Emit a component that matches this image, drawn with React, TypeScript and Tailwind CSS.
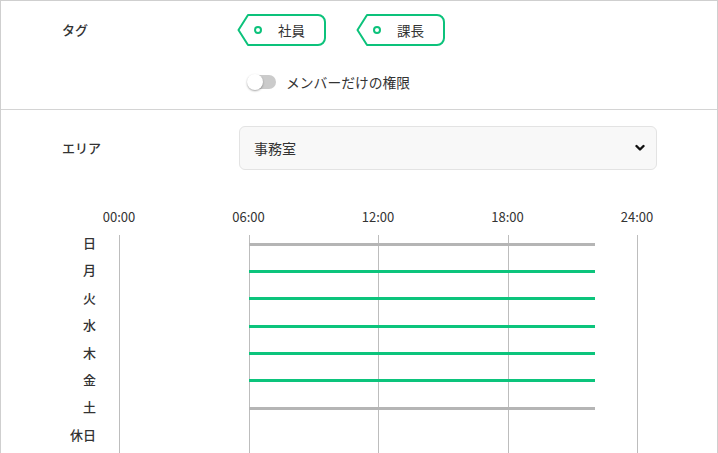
import React from "react";

const font = { fontFamily: '"Noto Sans CJK JP", "Noto Sans", sans-serif' };

function Tag({ label }: { label: string }) {
  return (
    <div className="relative w-[89px] h-[32px] flex items-center">
      <svg className="absolute inset-0" width="89" height="32" viewBox="0 0 89 32">
        <path
          d="M11 1 H81 A7 7 0 0 1 88 8 V24 A7 7 0 0 1 81 31 H11 L1.5 16 Z"
          fill="white"
          stroke="#0cc27b"
          strokeWidth="2"
          strokeLinejoin="round"
        />
      </svg>
      <div className="relative flex items-center pl-[17px]">
        <span className="w-[8px] h-[8px] rounded-full border-2 border-[#0cc27b]" />
        <span className="ml-[16px] text-[13.5px] text-[#333]">{label}</span>
      </div>
    </div>
  );
}

const days = [
  { d: "日", on: false },
  { d: "月", on: true },
  { d: "火", on: true },
  { d: "水", on: true },
  { d: "木", on: true },
  { d: "金", on: true },
  { d: "土", on: false },
  { d: "休日", on: null },
];

const hours = ["00:00", "06:00", "12:00", "18:00", "24:00"];

export default function App() {
  const chartW = 518;
  return (
    <div
      className="w-[718px] h-[453px] overflow-hidden bg-white border-l border-t border-r border-[#cfcfcf] text-[#333]"
      style={font}
    >
      <div className="h-[109px] border-b border-[#d4d4d4] flex flex-col">
        <div className="flex items-center mt-[13px]">
          <div className="w-[236px] pl-[61px] text-[13px] font-medium">タグ</div>
          <div className="flex gap-[30px]">
            <Tag label="社員" />
            <Tag label="課長" />
          </div>
        </div>
        <div className="flex items-center mt-[26px] pl-[247px]">
          <div className="relative w-[28px] h-[14px] rounded-full bg-[#cbcbcb]">
            <div className="absolute left-[-1px] top-[-1px] w-[16px] h-[16px] rounded-full bg-white shadow-[0_1px_2px_rgba(0,0,0,0.35)]" />
          </div>
          <span className="ml-[10px] text-[13.8px]">メンバーだけの権限</span>
        </div>
      </div>

      <div className="flex items-center mt-[16px]">
        <div className="w-[238px] pl-[61px] text-[13px] font-medium">エリア</div>
        <div className="w-[418px] h-[44px] rounded-[6px] bg-[#f8f8f8] border border-[#e3e3e3] flex items-center justify-between pl-[14px] pr-[11px]">
          <span className="text-[14px]">事務室</span>
          <svg width="10" height="8" viewBox="0 0 10 8">
            <path d="M1.5 2 L5 5.5 L8.5 2" fill="none" stroke="#111" strokeWidth="2.4" strokeLinecap="round" strokeLinejoin="round" />
          </svg>
        </div>
      </div>

      <div className="relative mt-[35px]">
        <div className="flex h-[24px] items-center">
          <div className="w-[118px]" />
          <div className="relative w-[518px] h-full">
            {hours.map((h, i) => (
              <span
                key={h}
                className="absolute top-0 -translate-x-1/2 text-[13px] leading-[24px]"
                style={{ left: (chartW * i) / 4 }}
              >
                {h}
              </span>
            ))}
          </div>
        </div>
        <div className="flex mt-[0px]">
          <div className="w-[95px] flex flex-col items-end">
            {days.map((x) => (
              <div key={x.d} className="h-[27.4px] flex items-center text-[13px] font-medium">
                {x.d}
              </div>
            ))}
          </div>
          <div className="w-[23px]" />
          <div className="relative w-[518px]">
            {hours.map((h, i) => (
              <div
                key={h}
                className="absolute top-[6px] bottom-[-20px] w-[1px] bg-[#bdbdbd]"
                style={{ left: (chartW * i) / 4 }}
              />
            ))}
            {days.map((x) => (
              <div key={x.d} className="relative h-[27.4px]">
                {x.on !== null && (
                  <div
                    className={`absolute top-[13.5px] h-[3px] ${x.on ? "bg-[#0cc47c]" : "bg-[#b5b5b5]"}`}
                    style={{ left: (chartW * 6) / 24, width: (chartW * 16) / 24 + 1 }}
                  />
                )}
              </div>
            ))}
          </div>
        </div>
      </div>
    </div>
  );
}
